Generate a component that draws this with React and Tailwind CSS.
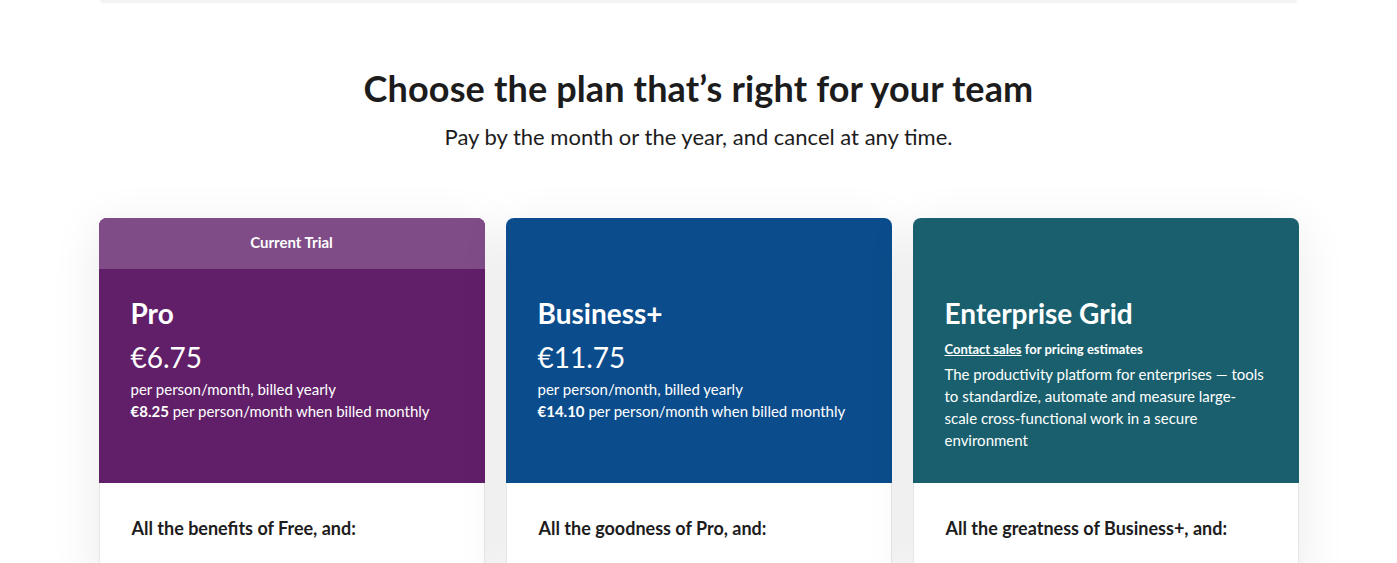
import React from 'react'

const plans = [
  {
    name: 'Pro',
    band: 'Current Trial',
    bg: 'bg-[#611f69]',
    bandBg: 'bg-[#7f4c88]',
    price: '€6.75',
    monthly: '€8.25',
    intro: 'All the benefits of Free, and:',
  },
  {
    name: 'Business+',
    bg: 'bg-[#0b4c8c]',
    price: '€11.75',
    monthly: '€14.10',
    intro: 'All the goodness of Pro, and:',
  },
  {
    name: 'Enterprise Grid',
    bg: 'bg-[#1a5f6d]',
    enterprise: true,
    intro: 'All the greatness of Business+, and:',
  },
]

function PlanCard({ plan }) {
  return (
    <div className="flex flex-col rounded-t-lg overflow-hidden bg-white shadow-[0_10px_50px_rgba(0,0,0,0.09)]">
      <div className={`${plan.bg} flex flex-col flex-1 text-white`}>
        {plan.band ? (
          <div className={`${plan.bandBg} h-[51px] flex items-center justify-center pb-[3px] text-[15px] font-bold`}>
            {plan.band}
          </div>
        ) : (
          <div className="h-[51px]"></div>
        )}
        <div className="px-8 pt-[26px] pb-8">
          <h2 className="text-[28px] leading-[36px] font-bold">{plan.name}</h2>
          {plan.enterprise ? (
            <>
              <p className="mt-2 text-[13px] leading-[20px] font-bold">
                <a href="#" className="underline">Contact sales</a> for pricing estimates
              </p>
              <p className="mt-1 text-[15px] leading-[22px]">
                The productivity platform for enterprises — tools to standardize, automate and measure large-scale cross-functional work in a secure environment
              </p>
            </>
          ) : (
            <>
              <p className="mt-2 text-[28px] leading-[36px]">{plan.price}</p>
              <p className="mt-[3px] text-[15px] leading-[22px]">per person/month, billed yearly</p>
              <p className="text-[15px] leading-[22px]">
                <span className="font-bold">{plan.monthly}</span> per person/month when billed monthly
              </p>
            </>
          )}
        </div>
      </div>
      <div className="border-x border-[#e6e6e6] px-8 pt-8 pb-10">
        <h3 className="text-[18px] leading-[26px] font-bold text-[#1d1c1d]">{plan.intro}</h3>
      </div>
    </div>
  )
}

function App() {
  return (
    <div className="min-h-screen bg-white font-['Lato','Liberation_Sans',sans-serif] text-[#1d1c1d]">
      <div className="w-[1197px] mx-auto h-[3px] bg-[#f4f2f5] rounded-b-lg"></div>
      <div className="w-[1200px] mx-auto">
        <div className="pt-[63px] text-center">
          <h1 className="text-[36px] leading-[44px] font-bold tracking-[0.15px]">Choose the plan that’s right for your team</h1>
          <p className="mt-[13px] text-[22px] leading-[28px]">Pay by the month or the year, and cancel at any time.</p>
        </div>
        <div className="mt-[67px] grid grid-cols-3 gap-[21px]">
          {plans.map((plan, idx) => (
            <PlanCard plan={plan} key={idx} />
          ))}
        </div>
      </div>
    </div>
  )
}

export default App
